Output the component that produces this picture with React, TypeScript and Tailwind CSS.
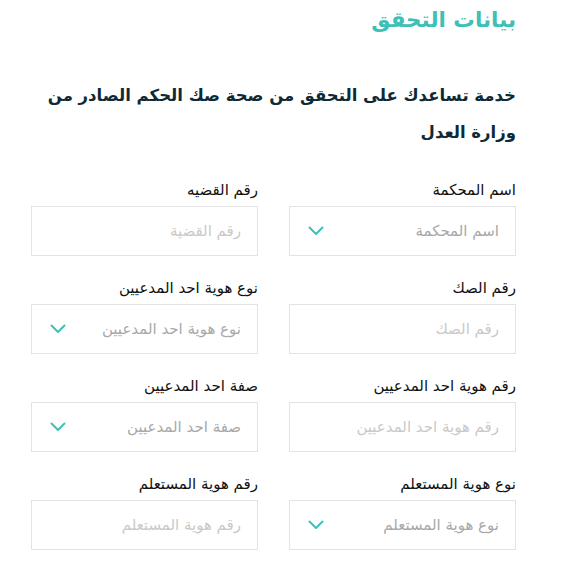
import React from "react";

const Chevron = () => (
  <svg width="16" height="10" viewBox="0 0 16 10" fill="none">
    <path d="M1.5 1.5L8 8L14.5 1.5" stroke="#3cc0b7" strokeWidth="2" strokeLinecap="round" strokeLinejoin="round" />
  </svg>
);

type Field = { label: string; placeholder: string; select?: boolean };

const fields: Field[] = [
  { label: "اسم المحكمة", placeholder: "اسم المحكمة", select: true },
  { label: "رقم القضيه", placeholder: "رقم القضية" },
  { label: "رقم الصك", placeholder: "رقم الصك" },
  { label: "نوع هوية احد المدعيين", placeholder: "نوع هوية احد المدعيين", select: true },
  { label: "رقم هوية احد المدعيين", placeholder: "رقم هوية احد المدعيين" },
  { label: "صفة احد المدعيين", placeholder: "صفة احد المدعيين", select: true },
  { label: "نوع هوية المستعلم", placeholder: "نوع هوية المستعلم", select: true },
  { label: "رقم هوية المستعلم", placeholder: "رقم هوية المستعلم" },
];

export default function App() {
  return (
    <div
      dir="rtl"
      className="w-[588px] h-[567px] bg-white overflow-hidden pr-[72px] pl-[31px]"
      style={{ fontFamily: '"DejaVu Sans", sans-serif' }}
    >
      <h1 className="text-[21.5px] leading-[40px] text-[#3cc0b7] font-bold">بيانات التحقق</h1>
      <p className="mt-[37px] text-[16.5px] leading-[37px] font-bold text-[#0e2a36]">
        خدمة تساعدك على التحقق من صحة صك الحكم الصادر من وزارة العدل
      </p>
      <div className="mt-[29px] grid grid-cols-2 gap-x-[31px] gap-y-[22px]">
        {fields.map((f, i) => (
          <div key={i} className="flex flex-col">
            <label className="text-[15px] leading-[20px] text-[#111] mb-[6px]">{f.label}</label>
            <div className="h-[50px] border border-[#e3e3e3] flex items-center justify-between pr-[16px] pl-[16px]">
              <span className={"text-[15px] " + (f.select ? "text-[#a8a8a8]" : "text-[#c9c9c9]")}>
                {f.placeholder}
              </span>
              {f.select ? <span className="ml-[2px]"><Chevron /></span> : null}
            </div>
          </div>
        ))}
      </div>
    </div>
  );
}
